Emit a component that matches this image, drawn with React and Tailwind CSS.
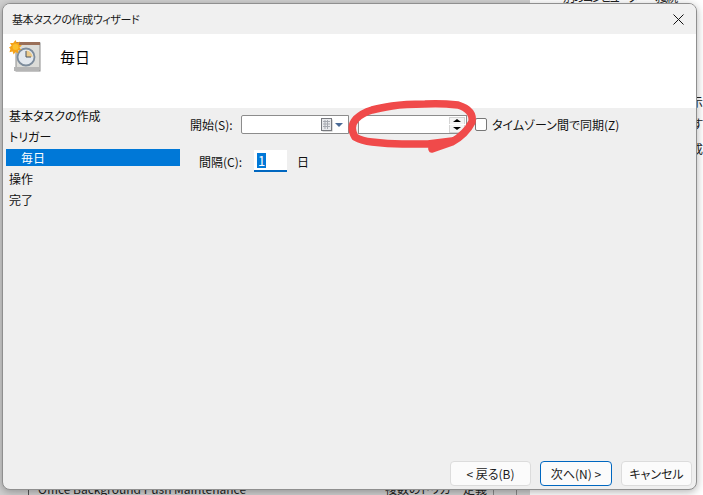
import React from 'react'

const font = { fontFamily: '"Noto Sans CJK JP", "Noto Sans", sans-serif', fontFeatureSettings: '"palt"' }

function ClockIcon() {
  return (
    <svg width="32" height="32" viewBox="0 0 32 32" className="mt-[6px] ml-[6px] shrink-0">
      <rect x="7" y="3" width="24" height="28" fill="#dcdcd8" stroke="#8b8b8b" />
      <rect x="7" y="2" width="24" height="3" fill="#9a6f58" />
      <rect x="5" y="27" width="25" height="4" fill="#b5b5b5" />
      <circle cx="17" cy="17" r="8.5" fill="#e3e8ee" stroke="#7d8c9c" strokeWidth="1.8" />
      <path d="M17 10.5a6.5 6.5 0 0 1 6.5 6.5H17z" fill="#eccb8c" />
      <path d="M17 11v6h5" fill="none" stroke="#4a5563" strokeWidth="1" />
      <path d="M6.5 0l1.3 3 2.9-1.4-.9 3.1 3.2.8-2.6 2 2 2.6-3.2.1.2 3.2-2.9-1.5-1.9 2.6-1-3.1-3.1.8.9-3.1L0 7.6l2.6-1.9L1 2.9l3.2.2z" fill="#f5a31a" />
      <circle cx="6.5" cy="7" r="3" fill="#fbc02d" />
    </svg>
  )
}

function CalendarIcon() {
  return (
    <svg width="12" height="14" viewBox="0 0 12 14">
      <rect x="1.5" y="1.5" width="10" height="12" fill="#b8b8b8" />
      <rect x="0.5" y="0.5" width="10" height="12" fill="#e8e9ec" stroke="#77797e" />
      <path d="M2 3.5h7M2 6h7M2 8.5h7M4 2v9M6.5 2v9" stroke="#a6a9b0" />
    </svg>
  )
}

function Spinner() {
  return (
    <div className="flex flex-col gap-[1px] w-[16px] h-[16px] mr-[1px]">
      <div className="flex-1 border-t border-x border-[#d4d4d4] bg-[#f4f4f4] flex items-center justify-center">
        <div className="w-0 h-0 border-x-[4px] border-x-transparent border-b-[3px] border-b-black" />
      </div>
      <div className="flex-1 border-b border-x border-[#d4d4d4] bg-[#f4f4f4] flex items-center justify-center">
        <div className="w-0 h-0 border-x-[4px] border-x-transparent border-t-[3px] border-t-black" />
      </div>
    </div>
  )
}

function NavItem({ children, active }) {
  if (active) {
    return (
      <div className="h-[17px] ml-[3px] w-[174px] my-[2px] pl-[15px] bg-[#0078d7] text-white flex items-center">
        {children}
      </div>
    )
  }
  return <div className="h-[21px] pl-[6px] flex items-center">{children}</div>
}

function WizardButton({ children, primary, width }) {
  return (
    <button
      className={
        'h-[25px] rounded-[4px] bg-[#fbfbfb] text-[12px] text-[#1b1b1b] flex items-center justify-center ' +
        width + ' ' +
        (primary ? 'border border-[#0067c0]' : 'border border-[#dcdcdc]')
      }
    >
      {children}
    </button>
  )
}

export default function App() {
  return (
    <div style={font} className="relative w-[703px] h-[495px] overflow-hidden bg-[#d0d0d0] pt-[3px] pl-[2px]">
      {/* what shows of the window behind the dialog */}
      <div className="absolute right-0 top-0 w-[173px] h-full bg-white text-[12px] leading-none text-[#222]">
        <div className="absolute top-[-9px] left-[33px] whitespace-nowrap tracking-[-2px]">別のコンピューターへ接続</div>
        <div className="absolute top-[96px] right-0">示</div>
        <div className="absolute top-[118px] right-0">す</div>
        <div className="absolute top-[143px] right-0">成</div>
      </div>
      <div className="absolute left-[28px] top-[485px] w-px h-[10px] bg-[#555]" />
      <div className="absolute left-[493px] top-[485px] w-px h-[10px] bg-[#888]" />
      <div className="absolute left-[516px] top-[485px] w-px h-[10px] bg-[#888]" />
      <div className="absolute left-[38px] top-[483px] text-[12px] leading-none text-[#222] whitespace-nowrap">
        Office Background Push Maintenance
      </div>
      <div className="absolute left-[385px] top-[483px] text-[12px] leading-none text-[#222] whitespace-nowrap">
        複数のトリガー定義
      </div>

      <div className="relative w-[695px] h-[487px] flex flex-col rounded-[8px] border border-[#8f8f8f] bg-[#efefef] overflow-hidden shadow-[0_2px_8px_rgba(0,0,0,0.3)]">
        <div className="h-[30px] shrink-0 bg-[#f0f0f0] flex items-center justify-between pl-[9px] pr-[12px]">
          <span className="text-[11px] tracking-[-0.4px] text-[#1b1b1b]">基本タスクの作成ウィザード</span>
          <svg width="11" height="11" viewBox="0 0 11 11">
            <path d="M0.5 0.5l10 10M10.5 0.5l-10 10" stroke="#111" strokeWidth="1" />
          </svg>
        </div>

        <div className="h-[74px] shrink-0 bg-white flex">
          <ClockIcon />
          <span className="ml-[19px] mt-[12px] text-[15px] text-black">毎日</span>
        </div>

        <div className="flex-1 flex">
          <div className="w-[184px] shrink-0 mt-[-3px] text-[12px] text-[#111]">
            <NavItem>基本タスクの作成</NavItem>
            <NavItem>トリガー</NavItem>
            <NavItem active>毎日</NavItem>
            <NavItem>操作</NavItem>
            <NavItem>完了</NavItem>
          </div>

          <div className="flex-1 pt-[7px] pl-[3px] text-[12px] text-[#111]">
            <div className="flex items-center h-[19px]">
              <span className="w-[51px]">開始(S):</span>
              <div className="w-[108px] h-[19px] bg-white border border-[#8c8c8c] rounded-l-[2px] flex items-center justify-end pr-[5px] gap-[2px]">
                <CalendarIcon />
                <div className="w-0 h-0 border-x-[4px] border-x-transparent border-t-[4px] border-t-[#4a6a96]" />
              </div>
              <div className="ml-[9px] w-[109px] h-[19px] bg-white border border-[#8c8c8c] flex items-center justify-end">
                <Spinner />
              </div>
              <div className="ml-[8px] w-[12px] h-[13px] rounded-[2px] border border-[#777] bg-white" />
              <span className="ml-[5px]">タイムゾーン間で同期(Z)</span>
            </div>

            <div className="flex items-center h-[22px] mt-[16px] pl-[9px]">
              <span className="w-[55px] pt-[2px]">間隔(C):</span>
              <div className="w-[33px] h-[22px] bg-white border-b-2 border-[#0067c0] flex items-center pl-[3px] text-[13px]">
                <span className="bg-[#0078d7] text-white leading-[15px] px-[1px]">1</span>
              </div>
              <span className="ml-[10px] pt-[2px]">日</span>
            </div>
          </div>
        </div>

        <div className="h-[25px] mb-[3px] shrink-0 flex justify-end items-start gap-[9px] pr-[4px]">
          <WizardButton width="w-[81px]">&lt; 戻る(B)</WizardButton>
          <WizardButton width="w-[72px]" primary>次へ(N) &gt;</WizardButton>
          <WizardButton width="w-[71px]">キャンセル</WizardButton>
        </div>
      </div>

      {/* red pen scribble around the time field */}
      <svg className="absolute inset-0 pointer-events-none" width="703" height="495" viewBox="0 0 703 495">
        <path
          d="M432 149L452 142Q466 134 472 122Q474 110 458 105Q440 103 425 104Q405 104 392 106Q380 108 372 110Q362 113 356 119Q349 127 355 137Q362 141 372 142Q388 144 402 144L428 144L452 141"
          fill="none"
          stroke="#f04a4a"
          strokeWidth="7.5"
          strokeLinecap="round"
          strokeLinejoin="round"
        />
      </svg>
    </div>
  )
}
